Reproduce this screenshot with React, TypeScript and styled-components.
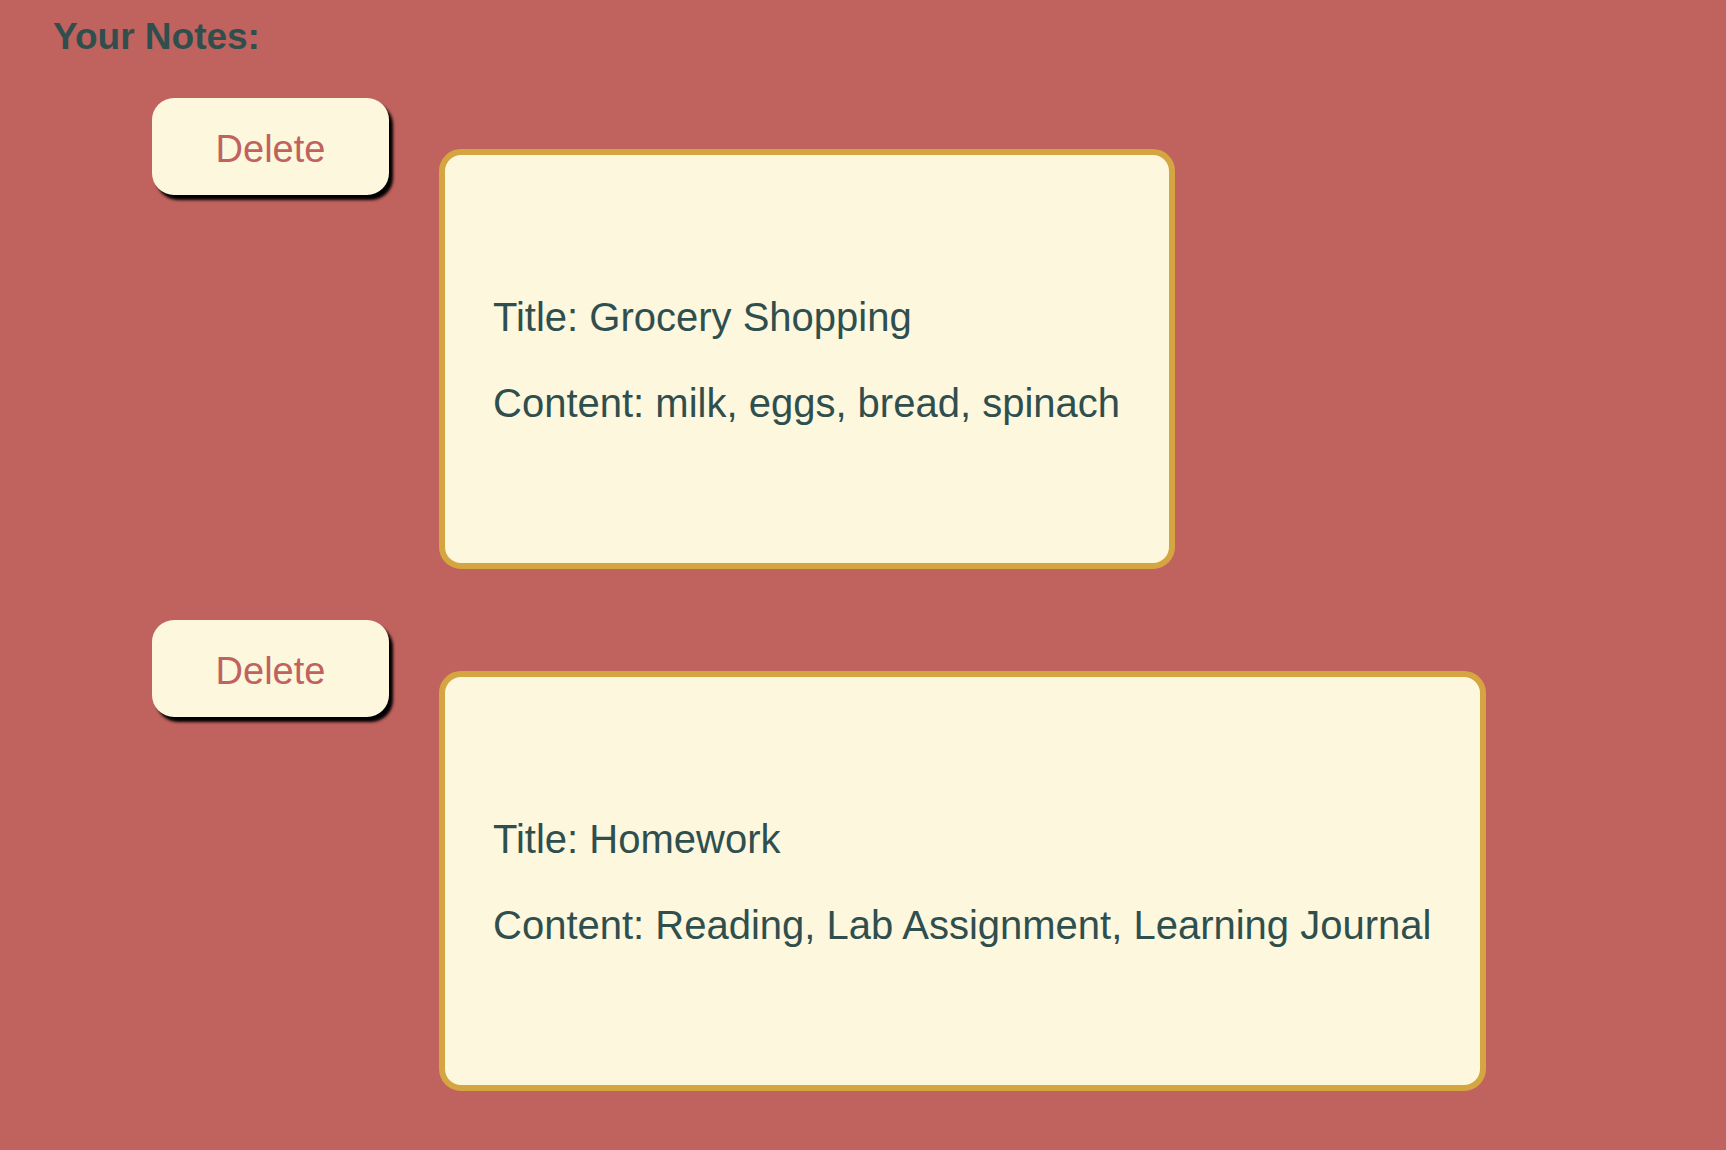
import React from "react";
import styled, { createGlobalStyle } from "styled-components";

const GlobalStyle = createGlobalStyle`
  html, body {
    margin: 0;
    padding: 0;
    background: #c0625e;
  }
  body {
    font-family: "Liberation Sans", Arial, Helvetica, sans-serif;
    min-height: 1150px;
  }
`;

const Page = styled.div`
  background: #c0625e;
  min-height: 1150px;
  padding-top: 16px;
  box-sizing: border-box;
`;

const Heading = styled.h2`
  margin: 0 0 0 53px;
  font-size: 37px;
  line-height: 42px;
  font-weight: 700;
  color: #2f4f4f;
`;

const NoteList = styled.div`
  display: flex;
  flex-direction: column;
  gap: 51px;
  margin-top: 40px;
  padding-left: 152px;
`;

const NoteRow = styled.div`
  display: flex;
  align-items: flex-start;
  gap: 50px;
`;

const DeleteButton = styled.button`
  flex: none;
  width: 237px;
  height: 97px;
  border: none;
  border-radius: 22px;
  background: #fdf7de;
  color: #c0625e;
  font-family: "Liberation Sans", Arial, Helvetica, sans-serif;
  font-size: 38px;
  box-shadow: 4px 5px 3px #000;
  cursor: pointer;
  padding: 5px 0 0 0;
`;

const NoteCard = styled.div`
  margin-top: 51px;
  width: fit-content;
  box-sizing: border-box;
  height: 420px;
  padding: 99px 49px 0 48px;
  background: #fdf7de;
  border: 6px solid #d4a540;
  border-radius: 22px;
  color: #2f4f4f;
`;

const NoteLine = styled.p`
  margin: 40px 0 0 0;
  font-size: 40px;
  line-height: 46px;
  white-space: nowrap;
`;

const notes = [
  { title: "Grocery Shopping", content: "milk, eggs, bread, spinach" },
  { title: "Homework", content: "Reading, Lab Assignment, Learning Journal" },
];

export default function App() {
  return (
    <Page>
      <GlobalStyle />
      <Heading>Your Notes:</Heading>
      <NoteList>
        {notes.map((n) => (
          <NoteRow key={n.title}>
            <DeleteButton>Delete</DeleteButton>
            <NoteCard>
              <NoteLine>Title: {n.title}</NoteLine>
              <NoteLine>Content: {n.content}</NoteLine>
            </NoteCard>
          </NoteRow>
        ))}
      </NoteList>
    </Page>
  );
}
